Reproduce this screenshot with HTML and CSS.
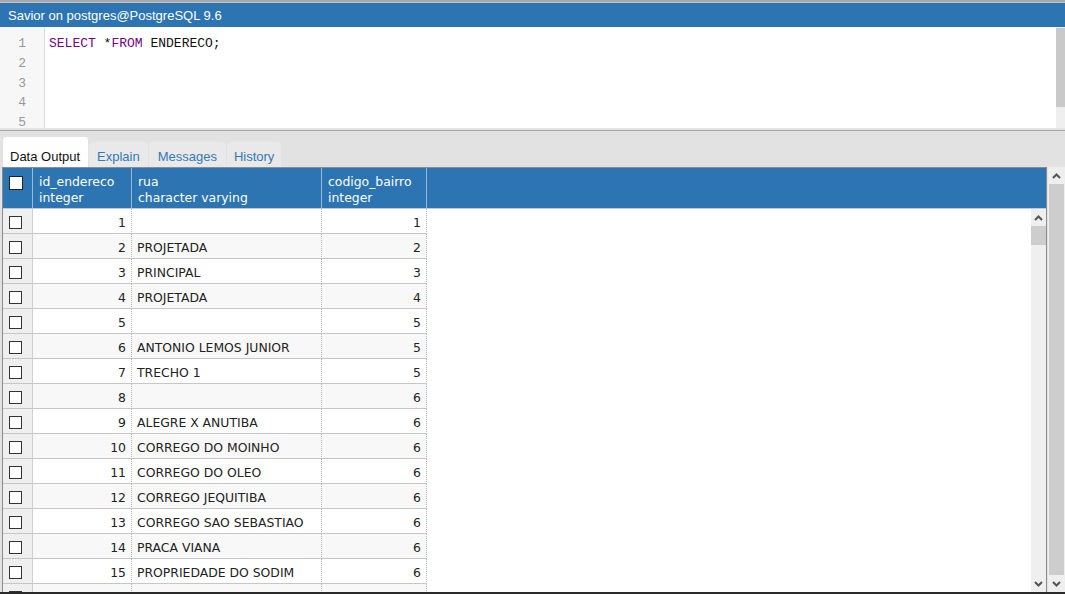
FILE: index.html
```html
<!DOCTYPE html>
<html>
<head>
<meta charset="utf-8">
<link rel="stylesheet" href="styles.css">
</head>
<body>
<div class="app">
  <div class="topline"></div>
  <div class="titlebar">Savior on postgres@PostgreSQL 9.6</div>
  <div class="editor">
    <div class="gutter">
      <div class="ln">1</div><div class="ln">2</div><div class="ln">3</div><div class="ln">4</div><div class="ln">5</div>
    </div>
    <div class="code">
      <div class="cl"><span class="kw">SELECT</span> *<span class="kw">FROM</span> ENDERECO;</div>
    </div>
    <div class="escroll"><div class="ethumb"></div></div>
  </div>
  <div class="sep"></div>
  <div class="tabs">
    <div class="tab active">Data Output</div>
    <div class="tab">Explain</div>
    <div class="tab">Messages</div>
    <div class="tab">History</div>
  </div>
  <div class="results">
    <div class="grid">
      <div class="ghead">
        <div class="hc hchk"><span class="cb hcb"></span></div>
        <div class="hc c1"><div>id_endereco</div><div>integer</div></div>
        <div class="hc c2"><div>rua</div><div>character varying</div></div>
        <div class="hc c3"><div>codigo_bairro</div><div>integer</div></div>
        <div class="hc hfill"></div>
      </div>
      <div class="gbody">
        <div class="rows">
          <div class="row"><div class="chk"><span class="cb"></span></div><div class="c c1 num">1</div><div class="c c2"></div><div class="c c3 num">1</div></div>
          <div class="row even"><div class="chk"><span class="cb"></span></div><div class="c c1 num">2</div><div class="c c2">PROJETADA</div><div class="c c3 num">2</div></div>
          <div class="row"><div class="chk"><span class="cb"></span></div><div class="c c1 num">3</div><div class="c c2">PRINCIPAL</div><div class="c c3 num">3</div></div>
          <div class="row even"><div class="chk"><span class="cb"></span></div><div class="c c1 num">4</div><div class="c c2">PROJETADA</div><div class="c c3 num">4</div></div>
          <div class="row"><div class="chk"><span class="cb"></span></div><div class="c c1 num">5</div><div class="c c2"></div><div class="c c3 num">5</div></div>
          <div class="row even"><div class="chk"><span class="cb"></span></div><div class="c c1 num">6</div><div class="c c2">ANTONIO LEMOS JUNIOR</div><div class="c c3 num">5</div></div>
          <div class="row"><div class="chk"><span class="cb"></span></div><div class="c c1 num">7</div><div class="c c2">TRECHO 1</div><div class="c c3 num">5</div></div>
          <div class="row even"><div class="chk"><span class="cb"></span></div><div class="c c1 num">8</div><div class="c c2"></div><div class="c c3 num">6</div></div>
          <div class="row"><div class="chk"><span class="cb"></span></div><div class="c c1 num">9</div><div class="c c2">ALEGRE X ANUTIBA</div><div class="c c3 num">6</div></div>
          <div class="row even"><div class="chk"><span class="cb"></span></div><div class="c c1 num">10</div><div class="c c2">CORREGO DO MOINHO</div><div class="c c3 num">6</div></div>
          <div class="row"><div class="chk"><span class="cb"></span></div><div class="c c1 num">11</div><div class="c c2">CORREGO DO OLEO</div><div class="c c3 num">6</div></div>
          <div class="row even"><div class="chk"><span class="cb"></span></div><div class="c c1 num">12</div><div class="c c2">CORREGO JEQUITIBA</div><div class="c c3 num">6</div></div>
          <div class="row"><div class="chk"><span class="cb"></span></div><div class="c c1 num">13</div><div class="c c2">CORREGO SAO SEBASTIAO</div><div class="c c3 num">6</div></div>
          <div class="row even"><div class="chk"><span class="cb"></span></div><div class="c c1 num">14</div><div class="c c2">PRACA VIANA</div><div class="c c3 num">6</div></div>
          <div class="row"><div class="chk"><span class="cb"></span></div><div class="c c1 num">15</div><div class="c c2">PROPRIEDADE DO SODIM</div><div class="c c3 num">6</div></div>
          <div class="row even"><div class="chk"><span class="cb"></span></div><div class="c c1 num"></div><div class="c c2"></div><div class="c c3 num"></div></div>
        </div>
        <div class="vscroll inner">
          <div class="arrow"><svg width="9" height="6" viewBox="0 0 9 6"><polyline points="1,5 4.5,1.5 8,5" fill="none" stroke="#555" stroke-width="2"/></svg></div>
          <div class="thumb ithumb"></div>
          <div class="track"></div>
          <div class="arrow"><svg width="9" height="6" viewBox="0 0 9 6"><polyline points="1,1 4.5,4.5 8,1" fill="none" stroke="#555" stroke-width="2"/></svg></div>
        </div>
      </div>
    </div>
    <div class="vscroll outer">
      <div class="arrow"><svg width="9" height="6" viewBox="0 0 9 6"><polyline points="1,5 4.5,1.5 8,5" fill="none" stroke="#555" stroke-width="2"/></svg></div>
      <div class="thumb othumb"></div>
      <div class="arrow"><svg width="9" height="6" viewBox="0 0 9 6"><polyline points="1,1 4.5,4.5 8,1" fill="none" stroke="#555" stroke-width="2"/></svg></div>
    </div>
  </div>
</div>
</body>
</html>
```

FILE: styles.css
```css
* { box-sizing: border-box; }
html, body { margin: 0; padding: 0; }
body {
  width: 1065px;
  height: 594px;
  overflow: hidden;
  background: #e2e2e2;
  font-family: "Liberation Sans", Arial, sans-serif;
}
.app {
  display: flex;
  flex-direction: column;
  height: 594px;
  border-bottom: 2px solid #2a2a2a;
}
.app > * { flex-shrink: 0; }
.topline {
  height: 3px;
  background: #a8a8a8;
  border-bottom: 1px solid #c4c4c4;
}
.titlebar {
  height: 24px;
  background: #2c74b2;
  color: #fff;
  font-size: 13px;
  line-height: 26px;
  padding-left: 8px;
}
.editor {
  height: 101px;
  display: flex;
  background: #fff;
}
.gutter {
  width: 45px;
  background: #f7f7f7;
  border-right: 1px solid #dddddd;
  padding-top: 7px;
}
.ln {
  height: 19.8px;
  line-height: 19.8px;
  text-align: right;
  padding-right: 18px;
  color: #999;
  font-family: "Liberation Mono", "Courier New", monospace;
  font-size: 13px;
}
.code {
  flex: 1;
  padding-top: 7px;
  padding-left: 4px;
}
.cl {
  height: 19.8px;
  line-height: 19.8px;
  font-family: "Liberation Mono", "Courier New", monospace;
  font-size: 13px;
  color: #111;
}
.kw { color: #770088; }
.escroll {
  width: 9px;
  background: #efefef;
  padding-top: 1px;
}
.ethumb {
  height: 79px;
  background: #c9c9c9;
}
.sep {
  height: 3px;
  background: #e4e4e4;
  border-bottom: 1px solid #a6a6a6;
}
.tabs {
  height: 36px;
  display: flex;
  align-items: flex-end;
  padding-left: 3px;
  background: #e2e2e2;
}
.tab {
  height: 25px;
  padding: 0 8px;
  font-size: 13px;
  line-height: 30px;
  color: #337ab7;
  background: #e9e9e9;
  border-radius: 4px 4px 0 0;
  margin-right: 1px;
}
.tab:nth-child(3) { padding: 0 9px; }
.tab:nth-child(4) { padding: 0 7px; }
.tab.active {
  height: 30px;
  padding: 0 7px;
  line-height: 40px;
  color: #111;
  background: #fff;
  width: 85px;
}
.results {
  flex: 1 1 auto !important;
  display: flex;
  padding-left: 2px;
  min-height: 0;
}
.grid {
  width: 1045px;
  border: 1px solid #8c8c8c;
  border-bottom: none;
  background: #fff;
  display: flex;
  flex-direction: column;
  min-height: 0;
}
.ghead {
  height: 41px;
  flex-shrink: 0;
  display: flex;
  background: #2c74b2;
  border-bottom: 1px solid #c8c8c8;
  font-family: "DejaVu Sans", Verdana, sans-serif;
  font-size: 12.4px;
  color: #fff;
}
.hc {
  border-right: 1px solid #9cb8d3;
  padding: 6px 0 0 6px;
  line-height: 16px;
}
.hchk {
  width: 30px;
  padding: 8px 0 0 6px;
  border-right: 1px solid #9cb8d3;
}
.hfill { flex: 1; border-right: none; }
.c1 { width: 99px; }
.c2 { width: 190px; }
.c3 { width: 105px; }
.cb {
  display: block;
  width: 13px;
  height: 13px;
  border: 1px solid #333;
  background: #fff;
}
.hcb { border-color: #222; width: 14px; height: 14px; }
.gbody {
  flex: 1;
  display: flex;
  min-height: 0;
}
.rows {
  flex: 1;
  overflow: hidden;
}
.row {
  display: flex;
  height: 25px;
  font-family: "DejaVu Sans", Verdana, sans-serif;
  font-size: 12.4px;
  color: #222;
}
.chk {
  width: 30px;
  background: #efefef;
  border-right: 1px solid #cfcfcf;
  border-bottom: 1px solid #c6c6c6;
  padding: 7px 0 0 6px;
}
.c {
  border-right: 1px dotted #b4b4b4;
  border-bottom: 1px solid #c6c6c6;
  line-height: 28px;
  padding: 0 5px 0 5px;
  white-space: nowrap;
}
.row.even .c { background: #f8f8f8; }
.num { text-align: right; }
.vscroll {
  display: flex;
  flex-direction: column;
  background: #efefef;
}
.vscroll.inner { width: 15px; }
.vscroll.outer {
  width: 17px;
  margin-left: 1px;
}
.arrow {
  height: 17px;
  flex-shrink: 0;
  display: flex;
  align-items: center;
  justify-content: center;
}
.thumb { background: #cdcdcd; }
.ithumb { height: 19px; flex-shrink: 0; }
.track { flex: 1; }
.othumb { flex: 1; margin: 0 1px; }
```
